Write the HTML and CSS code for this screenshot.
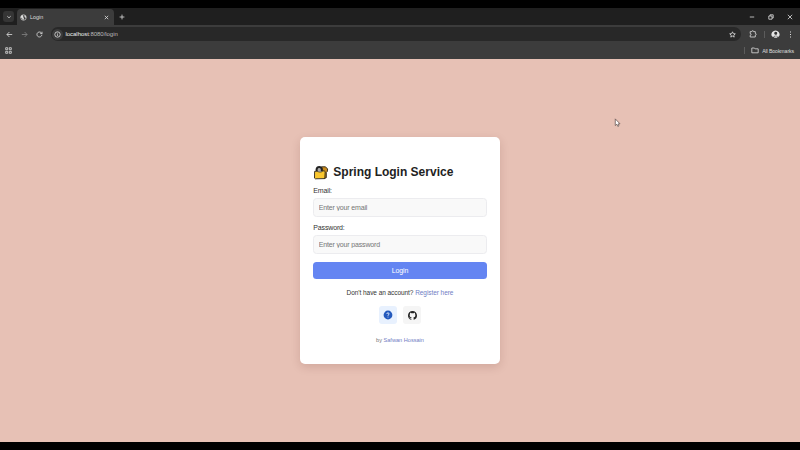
FILE: index.html
```html
<!DOCTYPE html>
<html lang="en">
<head>
<meta charset="utf-8">
<title>Login</title>
<link rel="stylesheet" href="styles.css">
</head>
<body>
<div class="browser">
  <header class="tabs">
    <div class="tab-search"><svg width="6" height="6" viewBox="0 0 6 6"><path d="M1.3 2.2 3 3.8 4.7 2.2"/></svg></div>
    <div class="tab">
      <svg width="7" height="7" viewBox="0 0 14 14"><circle cx="7" cy="7" r="5.5"/><path class="solid" d="M2 4 5 2 7 4 6 6 8 8 7 12 5 11 4 8 1 7zM9 2 12 5 12 8 9 6z"/></svg>
      <span class="tab-title">Login</span>
      <svg class="close" width="5" height="5" viewBox="0 0 5 5"><path d="m.8.8 3.4 3.4M4.2.8.8 4.2"/></svg>
    </div>
    <svg class="plus" width="6" height="6" viewBox="0 0 6 6"><path d="M3 .6v4.8M.6 3h4.8"/></svg>
    <div class="window-controls">
      <svg width="6" height="6" viewBox="0 0 6 6"><path d="M.8 3h4.4"/></svg>
      <svg width="6" height="6" viewBox="0 0 6 6"><path d="M.8 2h3.2v3.2H.8zM2 2V.8h3.2V4H4"/></svg>
      <svg width="6" height="6" viewBox="0 0 6 6"><path d="m.8.8 4.4 4.4M5.2.8.8 5.2"/></svg>
    </div>
  </header>
  <div class="toolbar">
    <svg width="7" height="7" viewBox="0 0 7 7"><path d="M6.2 3.5H1M3.4 1 .9 3.5 3.4 6"/></svg>
    <svg class="dim" width="7" height="7" viewBox="0 0 7 7"><path d="M.8 3.5H6M3.6 1l2.5 2.5L3.6 6"/></svg>
    <svg width="7" height="7" viewBox="0 0 7 7"><path d="M5.9 3.8A2.5 2.5 0 1 1 5.2 1.7L6 2.5M6 .7v1.9H4.2"/></svg>
    <div class="address">
      <div class="site-info"><svg width="7" height="7" viewBox="0 0 7 7"><circle cx="3.5" cy="3.5" r="2.7"/><path d="M3.5 3.2v1.7M3.5 1.8v.7"/></svg></div>
      <span class="url">localhost<span class="url-rest">:8080/login</span></span>
      <svg class="star" width="7" height="7" viewBox="0 0 7 7"><path d="m3.5.8.8 1.8 2 .2-1.5 1.3.4 2-1.7-1-1.7 1 .4-2L.7 2.8l2-.2z"/></svg>
    </div>
    <div class="actions">
      <svg width="8" height="8" viewBox="0 0 8 8"><path d="M1.2 1.6h1.6a.9.9 0 0 1 1.8 0h1.7v1.8a.9.9 0 0 1 0 1.8V7H1.2V5.3a.9.9 0 0 0 0-1.8z"/></svg>
      <span class="divider"></span>
      <svg class="avatar" width="9" height="9" viewBox="0 0 9 9"><path class="face" d="M.5 5.5A4.1 4.1 0 1 1 8.5 5.5L7 7.3 5.8 5.8H3.5L2 7.3z"/><path class="person" d="M3.1 3.2Q3.3 1.5 4.9 1.7t1.3 2L5.5 4.8H4z"/><path class="face" d="M3.6 6.3h2.2l.6 1.5H3z"/></svg>
      <svg class="more" width="3" height="7" viewBox="0 0 3 7"><path class="solid" d="M1 .5h1v1H1zM1 3h1v1H1zM1 5.5h1v1H1z"/></svg>
    </div>
  </div>
  <div class="bookmarks">
    <svg width="7" height="7" viewBox="0 0 7 7"><path d="M.7.7h2v2h-2zM4.3.7h2v2h-2zM.7 4.3h2v2h-2zM4.3 4.3h2v2h-2z"/></svg>
    <div class="all-bookmarks">
      <span class="divider"></span>
      <svg width="8" height="7" viewBox="0 0 8 7"><path d="M.8 1h2.4l.8.8h3.2v4H.8z"/></svg>
      <span>All Bookmarks</span>
    </div>
  </div>
  <main class="page">
    <form class="card">
      <h1><svg width="16" height="15" viewBox="0 0 16 15"><path class="key" d="M8.5 1.8h4L14.6 4l-.3 2.5-1 1v5.2L11 13.5z"/><path class="shackle" d="M3.6 6V4.2Q4 2 6.2 2T8.8 4.2V6"/><path class="lock" d="M1.6 6.4 5 6.2l.4.7h3.2l.5-.9 2-.2 1.1.8-.4 7-9.5.2-.8-.7z"/></svg><span>Spring Login Service</span></h1>
      <label for="email">Email:</label>
      <input id="email" type="text" placeholder="Enter your email">
      <label for="password">Password:</label>
      <input id="password" type="password" placeholder="Enter your password">
      <button type="button">Login</button>
      <p class="register">Don't have an account? <a>Register here</a></p>
      <div class="links">
        <a class="help"><svg width="10" height="10" viewBox="0 0 10 10"><circle cx="5" cy="5" r="4.4"/><path d="M3.8 4Q4 2.8 5 2.8T6.1 4Q6 4.7 5 5.1v.7M5 6.7v.8"/></svg></a>
        <a class="github"><svg width="9" height="9" viewBox="0 0 16 16"><path d="M8 0C3.58 0 0 3.58 0 8c0 3.54 2.29 6.53 5.47 7.59.4.07.55-.17.55-.38v-1.49c-2.01.37-2.53-.49-2.69-.94-.09-.23-.48-.94-.82-1.13-.28-.15-.68-.52-.01-.53.63-.01 1.08.58 1.23.82.72 1.21 1.87.87 2.33.66.07-.52.28-.87.51-1.07-1.78-.2-3.64-.89-3.64-3.95 0-.87.31-1.59.82-2.15-.08-.2-.36-1.02.08-2.12 0 0 .67-.21 2.2.82a7.6 7.6 0 0 1 4 0c1.53-1.04 2.2-.82 2.2-.82.44 1.1.16 1.92.08 2.12.51.56.82 1.27.82 2.15 0 3.07-1.87 3.75-3.65 3.95.29.25.54.73.54 1.48v2.2c0 .21.15.46.55.38A8 8 0 0 0 16 8c0-4.42-3.58-8-8-8z"/></svg></a>
      </div>
      <p class="credit">by <a>Safwan Hossain</a></p>
    </form>
  </main>
  <svg class="cursor" width="7" height="10" viewBox="0 0 6 9"><path d="M1 .8v6l1.4-1.2.9 2 1-.5-.8-1.8h1.8z"/></svg>
</div>
</body>
</html>
```

FILE: styles.css
```css
* { box-sizing: border-box; }
body {
  margin: 0;
  background: #000;
  font-family: "Liberation Sans", Arial, sans-serif;
}
svg { display: block; flex: none; }
.browser {
  position: relative;
  display: flex;
  flex-direction: column;
  height: 450px;
  padding: 8px 0;
  overflow: hidden;
}
.tabs, .toolbar, .bookmarks { display: flex; align-items: center; flex: none; color: #dedede; }
.tabs svg, .toolbar svg, .bookmarks svg { fill: none; stroke: currentColor; stroke-width: .8; }
.tabs .solid, .toolbar .solid { fill: currentColor; stroke: none; }
.tabs { height: 17px; background: #1f1f1f; padding-left: 3px; }
.tab-search {
  display: grid;
  place-items: center;
  width: 11px;
  height: 11px;
  border-radius: 3px;
  background: #353535;
}
.tab {
  display: flex;
  align-items: center;
  align-self: stretch;
  width: 97px;
  margin: 1px 0 0 3px;
  padding: 0 5px 0 3px;
  border-radius: 4px 4px 0 0;
  background: #3c3c3c;
  font-size: 5.4px;
}
.tab svg:first-child { stroke-width: 1.3; }
.tab-title { margin-left: 3px; }
.close { margin-left: auto; }
.plus { margin-left: 5px; }
.window-controls { display: flex; gap: 13px; margin: 0 7px 0 auto; }
.toolbar { height: 18px; padding: 0 8px 0 6px; gap: 8px; background: #3c3c3c; }
.dim { opacity: .45; }
.address {
  display: flex;
  align-items: center;
  width: 693px;
  height: 14px;
  padding: 0 5px 0 1px;
  border-radius: 7px;
  background: #282828;
  font-size: 6px;
}
.site-info {
  display: grid;
  place-items: center;
  width: 11px;
  height: 11px;
  margin-right: 2.5px;
  border-radius: 50%;
  background: #3c3c3c;
}
.url { color: #eee; letter-spacing: -.04px; }
.url-rest { color: #bbb; }
.star { margin-left: auto; }
.actions { display: flex; align-items: center; margin-left: auto; }
.divider { width: 1px; height: 7px; background: #5c5c5c; }
.actions .divider { margin: 0 6px 0 7px; }
.avatar .face { fill: #e4e4e4; stroke: none; }
.avatar .person { fill: #333; stroke: none; }
.actions .more { margin-left: 9px; }
.bookmarks { height: 16px; padding: 0 6px 1px 5px; background: #3c3c3c; font-size: 5.2px; }
.all-bookmarks { display: flex; align-items: center; margin-left: auto; letter-spacing: -.1px; }
.all-bookmarks svg { margin: 0 3px 0 6px; }
.page {
  flex: 1;
  display: grid;
  place-items: center;
  background: #e7c1b5;
}
.card {
  display: flex;
  flex-direction: column;
  width: 200px;
  height: 227px;
  padding: 27px 13.3px 0;
  border-radius: 5px;
  background: #fff;
  box-shadow: 0 3px 10px rgba(80, 30, 20, .15);
  color: #333;
}
h1 {
  display: flex;
  align-items: center;
  gap: 4px;
  height: 16px;
  margin: 0;
  font-size: 12px;
  line-height: 16px;
  color: #222;
}
.shackle { fill: #aaa; stroke: #222; stroke-width: 2; }
.key { fill: #c98a1c; stroke: #2b2619; stroke-width: .9; }
.lock { fill: #f9c62e; stroke: #2b2619; stroke-width: .9; }
label { height: 8px; margin: 7px 0 3px; font-size: 7px; letter-spacing: -.15px; line-height: 8px; }
input {
  width: 100%;
  height: 19px;
  padding: 0 4.5px 1px;
  border: 1px solid #ececef;
  border-radius: 3.5px;
  background: #f9f9f9;
  font: 7px "Liberation Sans", Arial, sans-serif;
  letter-spacing: -.16px;
}
input::placeholder { color: #757575; }
button {
  height: 17px;
  margin-top: 8px;
  padding: 0;
  border: 0;
  border-radius: 3.5px;
  background: #6485f2;
  color: #fff;
  font: 7px "Liberation Sans", Arial, sans-serif;
  letter-spacing: -.1px;
}
p { margin: 0; text-align: center; }
p a { color: #6f7dc4; }
.register { margin-top: 10px; height: 8px; font-size: 6.5px; letter-spacing: -.06px; line-height: 8px; }
.links { display: flex; justify-content: center; gap: 6px; margin-top: 9px; }
.links a { display: grid; place-items: center; width: 18px; height: 18px; border-radius: 3px; }
.help { background: #e8f1fe; }
.help circle { fill: #2459bd; }
.help path { fill: none; stroke: #e8f1fe; stroke-width: .9; }
.github { background: #f5f5f5; }
.github path { fill: #222; }
.credit { margin-top: 12px; font-size: 5.6px; line-height: 8px; color: #777; }
.cursor { position: absolute; left: 614px; top: 118px; fill: #fff; stroke: #665652; stroke-width: .7; }
```
